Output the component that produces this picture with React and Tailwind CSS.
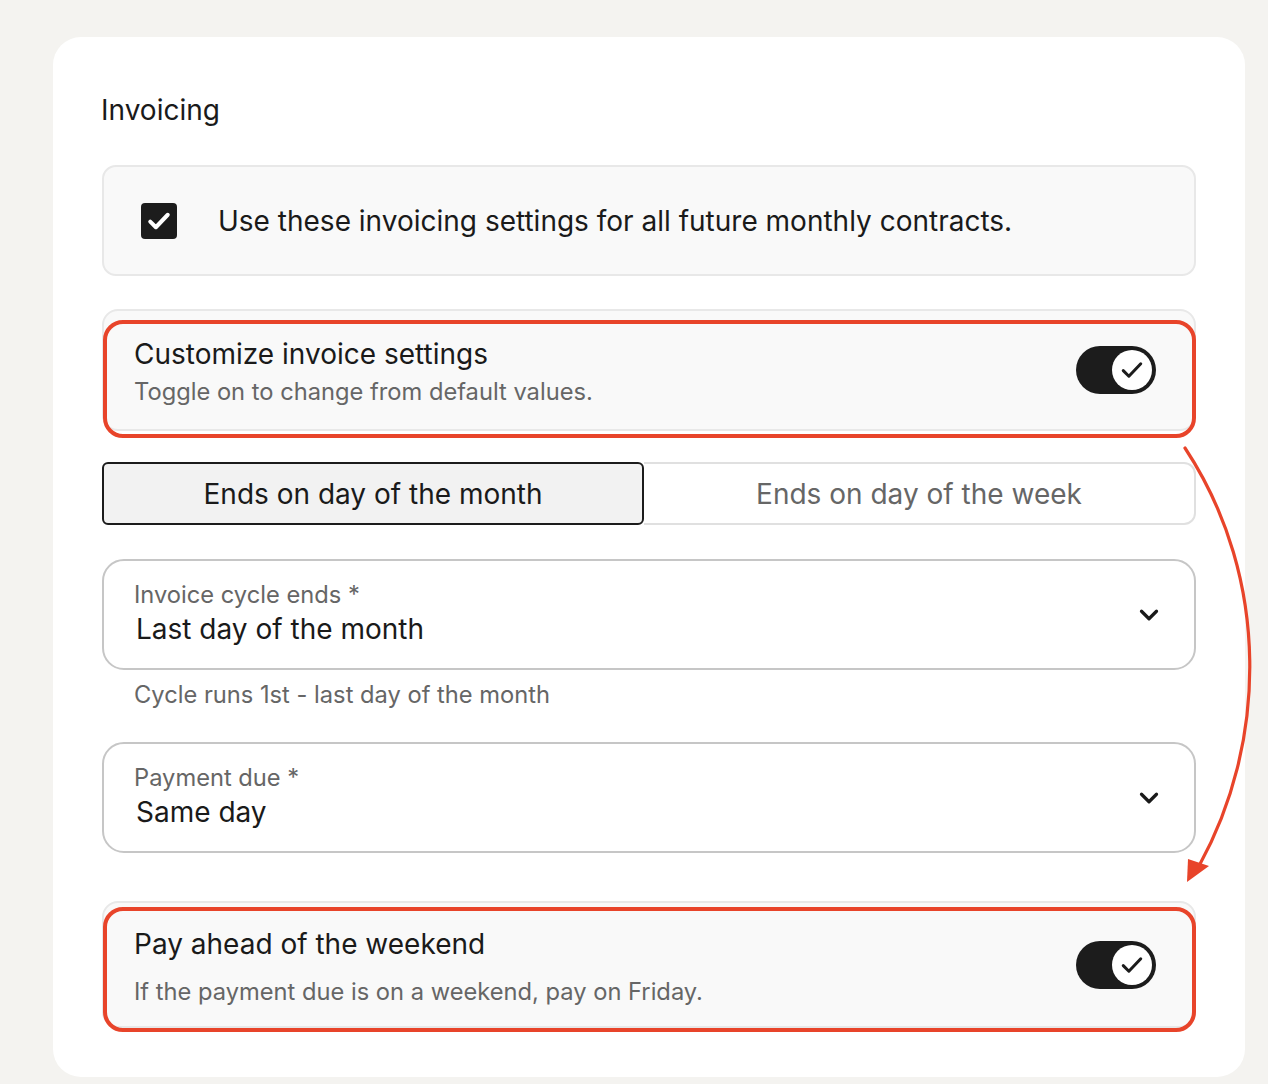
import React from "react";
import { ChevronDown } from "lucide-react";

function Toggle() {
  return (
    <div className="flex h-[48px] w-[80px] items-center justify-end rounded-full bg-[#1c1c1c] pr-[4px]">
      <div className="flex h-[40px] w-[40px] items-center justify-center rounded-full bg-white">
        <svg width="30" height="30" viewBox="0 0 24 24" fill="none" stroke="#1c1c1c" strokeWidth="2.4" strokeLinecap="round" strokeLinejoin="round">
          <path d="M5 12.5l4.5 4.5L19 7" />
        </svg>
      </div>
    </div>
  );
}

function ToggleCard({ title, subtitle, titleClass, subClass, redClass }) {
  return (
    <div className="relative rounded-[16px] border-2 border-[#e8e8e8] bg-[#f9f9f9]">
      <div className="flex items-center justify-between pl-[30px] pr-[38px]">
        <div>
          <div className={titleClass}>{title}</div>
          <div className={subClass}>{subtitle}</div>
        </div>
        <Toggle />
      </div>
      <div className={redClass}></div>
    </div>
  );
}

function SelectField({ label, value }) {
  return (
    <div className="flex h-[111px] items-center justify-between rounded-[22px] border-2 border-[#c6c6c6] bg-white pl-[30px] pr-[30px]">
      <div className="-mt-[2px]">
        <div className="text-[23.7px] leading-[30px] text-[#666666]">{label} *</div>
        <div className="ml-[2px] text-[28px] leading-[38px] text-[#1a1a1a]">{value}</div>
      </div>
      <ChevronDown size={30} strokeWidth={2.6} className="ml-auto text-[#1a1a1a]" />
    </div>
  );
}

export default function App() {
  return (
    <div className="relative min-h-[1084px] w-full overflow-hidden bg-[#f4f3f0] pl-[53px] pt-[37px]" style={{ fontFamily: "Inter, 'Noto Sans', sans-serif" }}>
      <div className="w-[1192px] rounded-[28px] bg-white px-[49px] pb-[49px] pt-[54px]">
        <h2 className="-ml-[1px] text-[28px] leading-[38px] text-[#1a1a1a]">Invoicing</h2>

        <div className="mt-[36px] flex h-[111px] items-center rounded-[14px] border-2 border-[#e8e8e8] bg-[#f9f9f9] pl-[37px]">
          <div className="flex h-[36px] w-[36px] items-center justify-center rounded-[4px] bg-[#1c1c1c]">
            <svg width="30" height="30" viewBox="0 0 24 24" fill="none" stroke="white" strokeWidth="3.2" strokeLinecap="round" strokeLinejoin="round">
              <path d="M5 12.5l4.5 4.5L19 7" />
            </svg>
          </div>
          <span className="ml-[41px] text-[28px] text-[#1a1a1a]">Use these invoicing settings for all future monthly contracts.</span>
        </div>

        <div className="mt-[33px]">
          <ToggleCard
            title="Customize invoice settings"
            subtitle="Toggle on to change from default values."
            titleClass="pt-[24px] text-[28px] leading-[38px] text-[#1a1a1a]"
            subClass="mt-[0px] pb-[18px] text-[23.7px] leading-[38px] text-[#666666]"
            redClass="pointer-events-none absolute -bottom-[9px] -left-[1px] -right-[2px] top-[9px] rounded-[20px] border-4 border-[#e8442a]"
          />
        </div>

        <div className="mt-[31px] flex h-[63px]">
          <div className="flex w-[542px] items-center justify-center rounded-[6px] border-2 border-[#1c1c1c] bg-[#f2f2f2] text-[28px] text-[#1a1a1a]">
            Ends on day of the month
          </div>
          <div className="flex flex-1 items-center justify-center rounded-r-[12px] border-2 border-l-0 border-[#e0e0e0] bg-white text-[28px] text-[#666666]">
            Ends on day of the week
          </div>
        </div>

        <div className="mt-[34px]">
          <SelectField label="Invoice cycle ends" value="Last day of the month" />
        </div>
        <div className="mt-[8px] pl-[32px] text-[23.7px] leading-[34px] text-[#666666]">Cycle runs 1st - last day of the month</div>

        <div className="mt-[30px]">
          <SelectField label="Payment due" value="Same day" />
        </div>

        <div className="mt-[48px]">
          <ToggleCard
            title="Pay ahead of the weekend"
            subtitle="If the payment due is on a weekend, pay on Friday."
            titleClass="pt-[22px] text-[28px] leading-[38px] text-[#1a1a1a]"
            subClass="mt-[10px] pb-[15px] text-[23.7px] leading-[38px] text-[#666666]"
            redClass="pointer-events-none absolute -bottom-[6px] -left-[1px] -right-[2px] top-[4px] rounded-[20px] border-4 border-[#e8442a]"
          />
        </div>
      </div>

      <svg className="pointer-events-none absolute left-0 top-0" width="1268" height="1084" viewBox="0 0 1268 1084" fill="none">
        <path d="M1185 448 C1272 580, 1266 745, 1199 866" stroke="#e8442a" strokeWidth="3.2" strokeLinecap="round" />
        <path d="M1187 882 L1188 859 L1209 866 Z" fill="#e8442a" />
      </svg>
    </div>
  );
}
